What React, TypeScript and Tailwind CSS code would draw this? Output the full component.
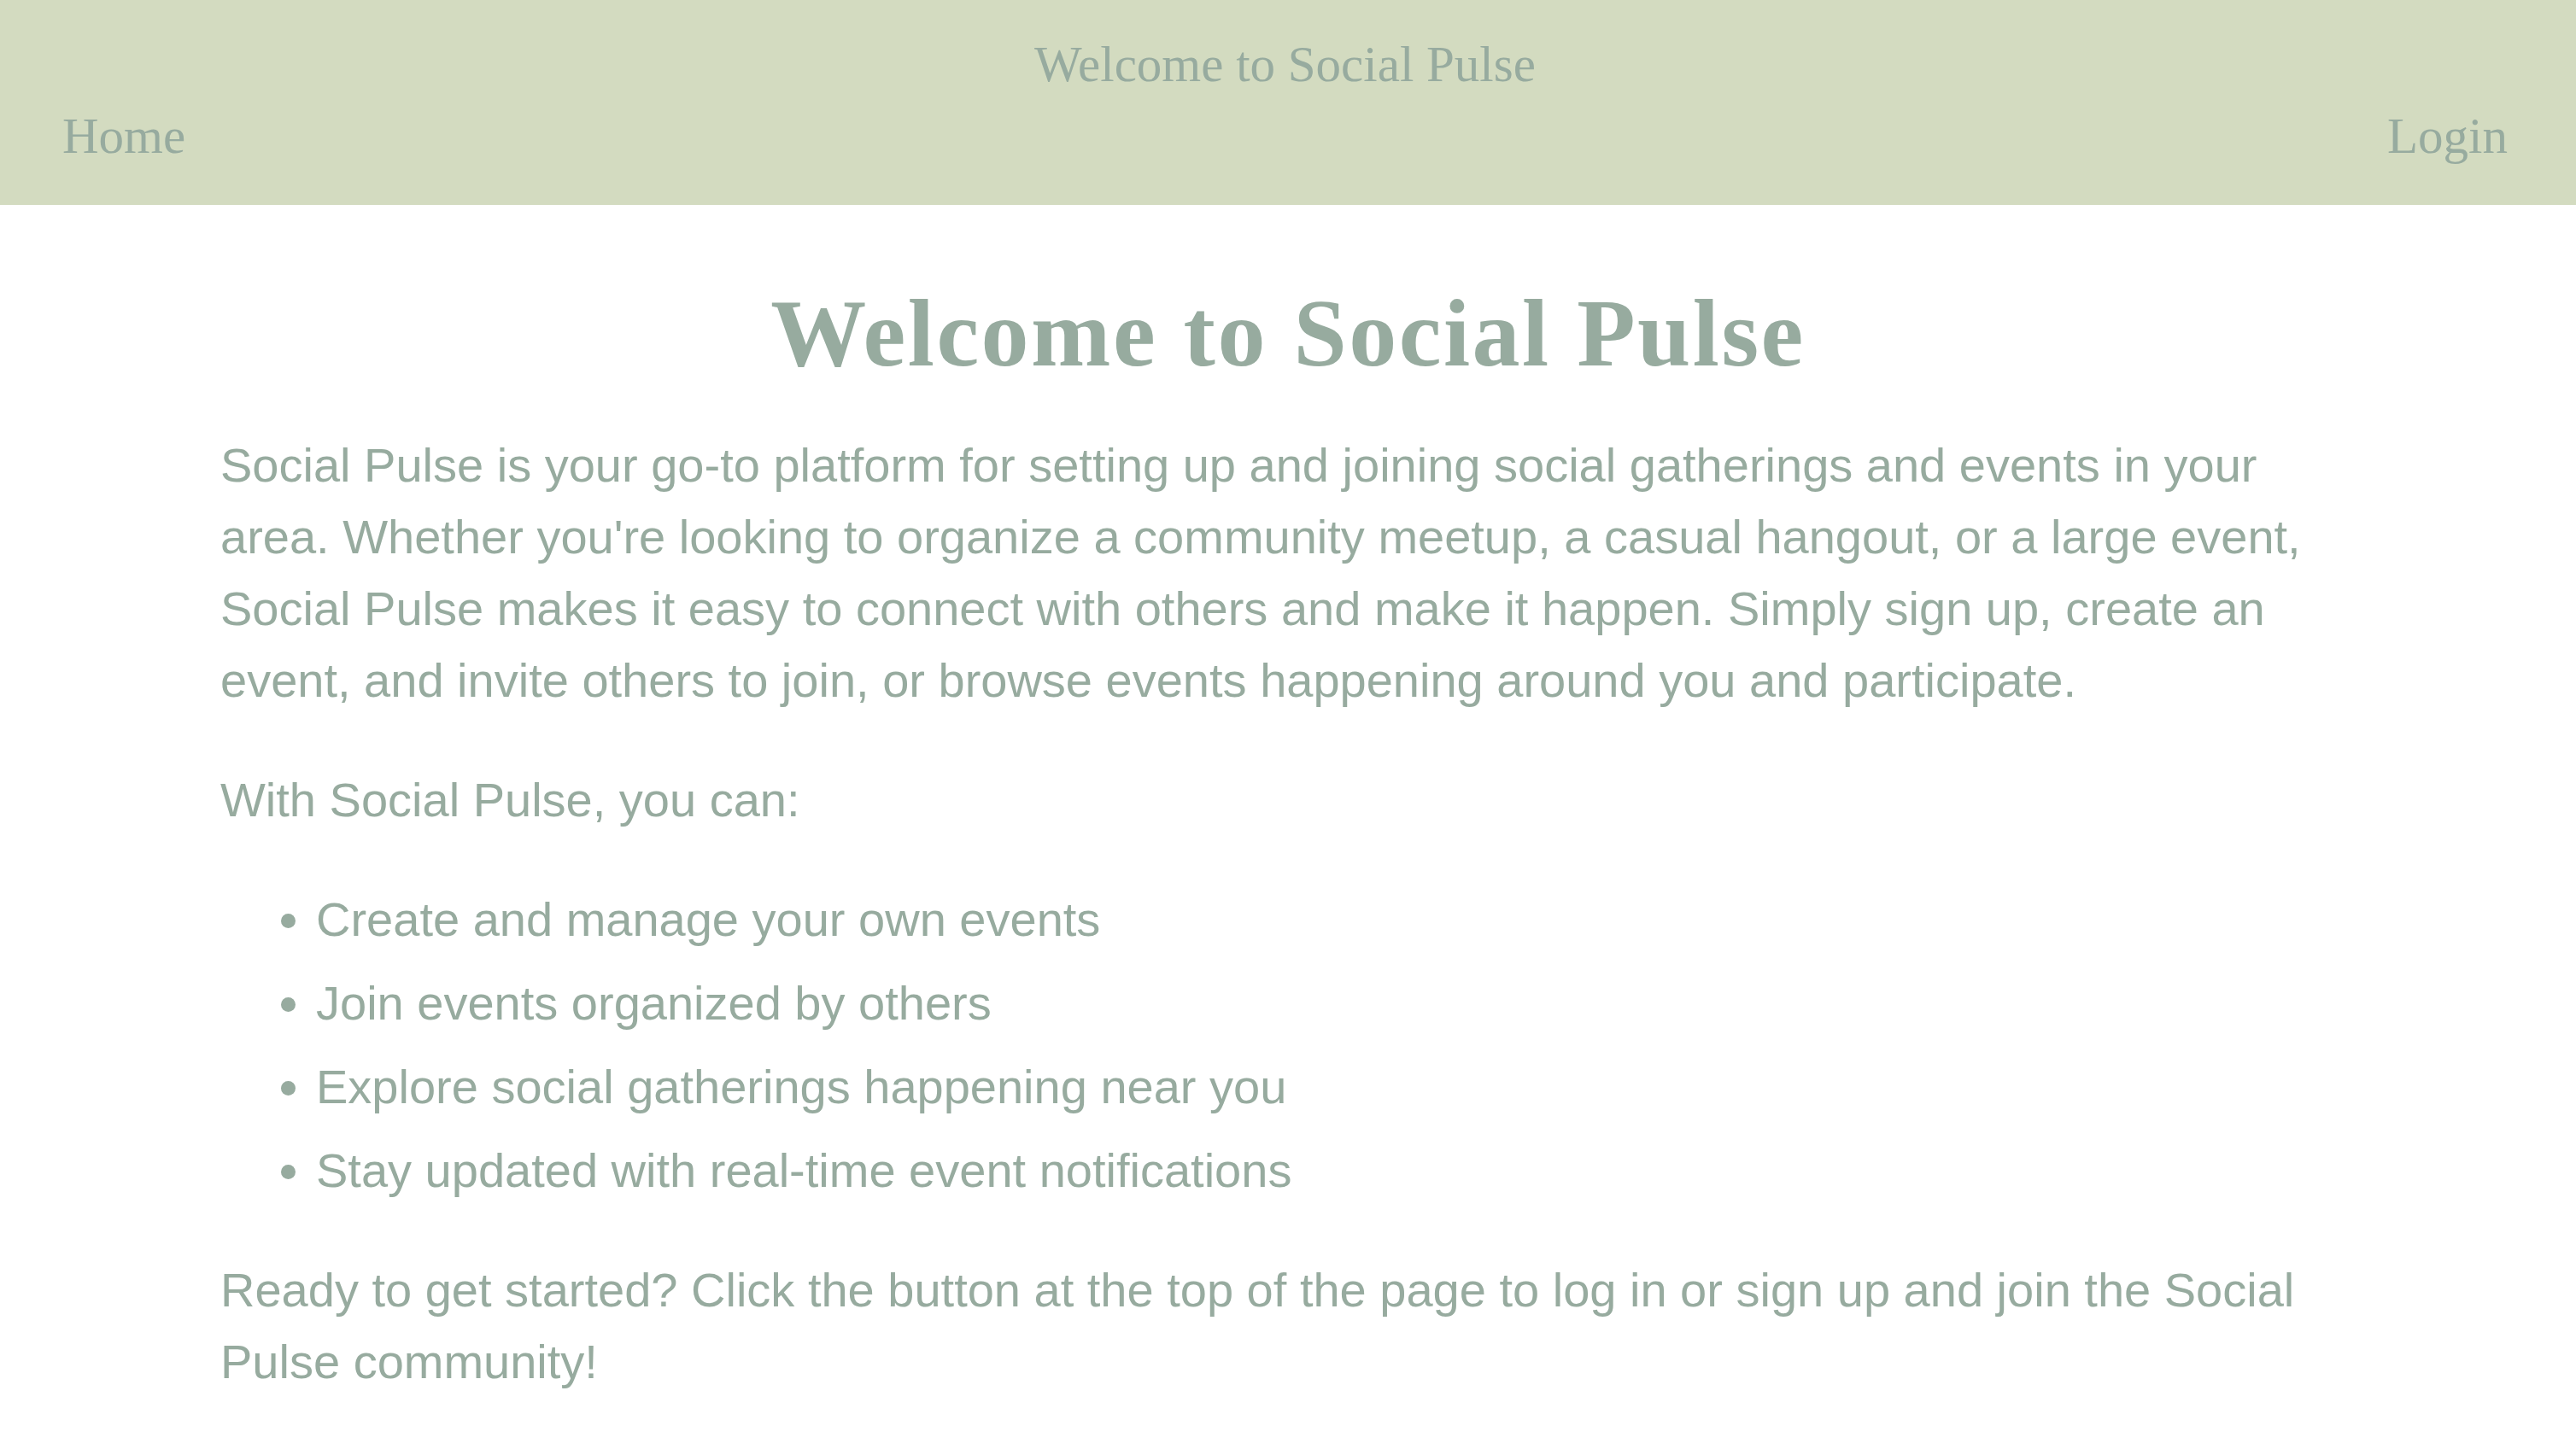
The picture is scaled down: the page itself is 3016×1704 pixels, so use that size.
const features = [
  "Create and manage your own events",
  "Join events organized by others",
  "Explore social gatherings happening near you",
  "Stay updated with real-time event notifications",
];

function Header() {
  return (
    <header className="bg-[#d3dbc0] pt-[33px] pb-[39px] pl-[73px] pr-[80px] font-['Liberation_Serif',Georgia,serif] text-[59px] leading-[84px] text-[#97ab9f]">
      <div className="text-center">Welcome to Social Pulse</div>
      <nav className="flex items-center justify-between">
        <a href="#">Home</a>
        <a href="#">Login</a>
      </nav>
    </header>
  );
}

export default function App() {
  return (
    <div className="min-h-screen bg-white text-[#97ab9f]">
      <Header />

      <main className="mx-auto w-[2500px] font-['Liberation_Sans',Helvetica,Arial,sans-serif] text-[56px] leading-[84px]">
        <h1 className="mt-[88px] mb-[50px] text-center font-['Liberation_Serif',Georgia,serif] text-[112px] leading-[125px] font-bold tracking-[2.5px]">
          Welcome to Social Pulse
        </h1>

        <p>
          Social Pulse is your go-to platform for setting up and joining social gatherings and events in your
          area. Whether you're looking to organize a community meetup, a casual hangout, or a large event,
          Social Pulse makes it easy to connect with others and make it happen. Simply sign up, create an
          event, and invite others to join, or browse events happening around you and participate.
        </p>

        <p className="mt-[56px]">With Social Pulse, you can:</p>

        <ul className="my-[56px] list-disc space-y-[14px] pl-[112px]">
          {features.map((f) => (
            <li key={f}>{f}</li>
          ))}
        </ul>

        <p>
          Ready to get started? Click the button at the top of the page to log in or sign up and join the Social
          Pulse community!
        </p>
      </main>
    </div>
  );
}
